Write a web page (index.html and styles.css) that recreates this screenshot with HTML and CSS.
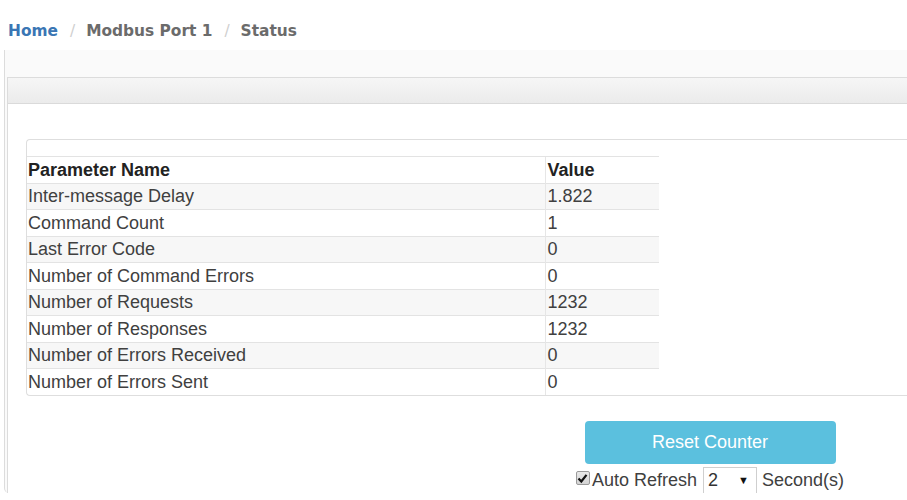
FILE: index.html
```html
<!DOCTYPE html>
<html>
<head>
<meta charset="utf-8">
<link rel="stylesheet" href="styles.css">
</head>
<body>
<nav class="breadcrumb">
  <a class="crumb-link" href="#">Home</a><span class="sep">/</span><span class="crumb">Modbus Port 1</span><span class="sep">/</span><span class="crumb">Status</span>
</nav>
<div class="wrap">
  <div class="panel">
    <div class="panel-heading"></div>
    <div class="panel-body">
      <div class="table-box">
        <table class="status-table">
          <thead>
            <tr><th class="c-name">Parameter Name</th><th class="c-val">Value</th></tr>
          </thead>
          <tbody>
            <tr class="odd"><td class="c-name">Inter-message Delay</td><td class="c-val">1.822</td></tr>
            <tr><td class="c-name">Command Count</td><td class="c-val">1</td></tr>
            <tr class="odd"><td class="c-name">Last Error Code</td><td class="c-val">0</td></tr>
            <tr><td class="c-name">Number of Command Errors</td><td class="c-val">0</td></tr>
            <tr class="odd"><td class="c-name">Number of Requests</td><td class="c-val">1232</td></tr>
            <tr><td class="c-name">Number of Responses</td><td class="c-val">1232</td></tr>
            <tr class="odd"><td class="c-name">Number of Errors Received</td><td class="c-val">0</td></tr>
            <tr><td class="c-name">Number of Errors Sent</td><td class="c-val">0</td></tr>
          </tbody>
        </table>
      </div>
      <div class="actions">
        <button class="btn-reset" type="button">Reset Counter</button>
        <div class="refresh-row">
          <span class="check"><svg width="11" height="11" viewBox="0 0 11 11"><path d="M1.5 5.5 L4.3 8.5 L9.5 1.8" fill="none" stroke="#111" stroke-width="2.2"/></svg></span><span class="lbl">Auto Refresh</span>
          <span class="select-wrap"><select class="sel"><option>2</option><option>5</option><option>10</option></select></span>
          <span class="lbl">Second(s)</span>
        </div>
      </div>
    </div>
  </div>
</div>
</body>
</html>
```

FILE: styles.css
```css
html, body {
  margin: 0;
  padding: 0;
  background: #fff;
}
body {
  font-family: "Liberation Sans", Arial, sans-serif;
  color: #404040;
  width: 907px;
}
.breadcrumb {
  box-sizing: border-box;
  height: 50px;
  padding: 22px 8px 0;
  font-family: "DejaVu Sans", Verdana, sans-serif;
  font-weight: bold;
  font-size: 15.4px;
  line-height: 18px;
  color: #6b6b6b;
}
.crumb-link {
  color: #3a76b4;
  text-decoration: none;
}
.sep {
  color: #cfcfcf;
  font-weight: normal;
  margin: 0 11px 0 12px;
}
.wrap {
  margin-left: 4px;
  border-left: 1px solid #dcdcdc;
  border-bottom-left-radius: 5px;
  background: #fafafa;
  padding-top: 27px;
}
.panel {
  margin-left: 2px;
  border-left: 1px solid #dcdcdc;
  border-top: 1px solid #dcdcdc;
  background: #fff;
}
.panel-heading {
  height: 25px;
  background: linear-gradient(#f6f6f6, #ebebeb);
  border-bottom: 1px solid #dadada;
}
.panel-body {
  padding: 35px 0 0 18px;
}
.table-box {
  border: 1px solid #dedede;
  border-right: none;
  border-radius: 4px 0 0 4px;
  padding-top: 16px;
}
.status-table {
  border-collapse: collapse;
  width: 632px;
  font-size: 18px;
}
.status-table th,
.status-table td {
  height: 26.5px;
  padding: 0 0 0 1px;
  text-align: left;
  border-top: 1px solid #e3e3e3;
  box-sizing: border-box;
  line-height: 20px;
}
.status-table th {
  font-weight: bold;
  color: #222;
}
.status-table .c-name {
  width: 518px;
}
.status-table .c-val {
  border-left: 1px solid #e6e6e6;
  padding-left: 2px;
}
.status-table tr.odd td {
  background: #f7f7f7;
}
.actions {
  width: 330px;
  margin: 25px 0 0 519px;
  display: flex;
  flex-direction: column;
  align-items: center;
}
.btn-reset {
  width: 251px;
  height: 43px;
  border: none;
  border-radius: 4px;
  background: #5bc0de;
  color: #fff;
  font-family: "Liberation Sans", Arial, sans-serif;
  font-size: 18px;
  padding: 0;
}
.refresh-row {
  display: flex;
  align-items: center;
  margin-top: 3px;
  font-size: 18px;
  color: #404040;
  height: 26px;
}
.check {
  display: inline-flex;
  align-items: center;
  justify-content: center;
  width: 12px;
  height: 12px;
  border: 1px solid #9a9a9a;
  border-radius: 2px;
  background: linear-gradient(#e8e8e8, #d4d4d4);
  margin-right: 2px;
  margin-top: -4px;
}
.select-wrap {
  position: relative;
  display: inline-block;
  margin: 0 5px 0 6px;
}
.select-wrap::after {
  content: "\25BC";
  position: absolute;
  right: 8px;
  top: 7px;
  font-size: 11px;
  color: #111;
  pointer-events: none;
}
.sel {
  appearance: none;
  -webkit-appearance: none;
  width: 54px;
  height: 27px;
  border: 1px solid #cfcfcf;
  border-radius: 0;
  background: #fff;
  font-family: "Liberation Sans", Arial, sans-serif;
  font-size: 18px;
  color: #333;
  padding: 0 0 0 4px;
  margin: 0;
  display: block;
}
```
